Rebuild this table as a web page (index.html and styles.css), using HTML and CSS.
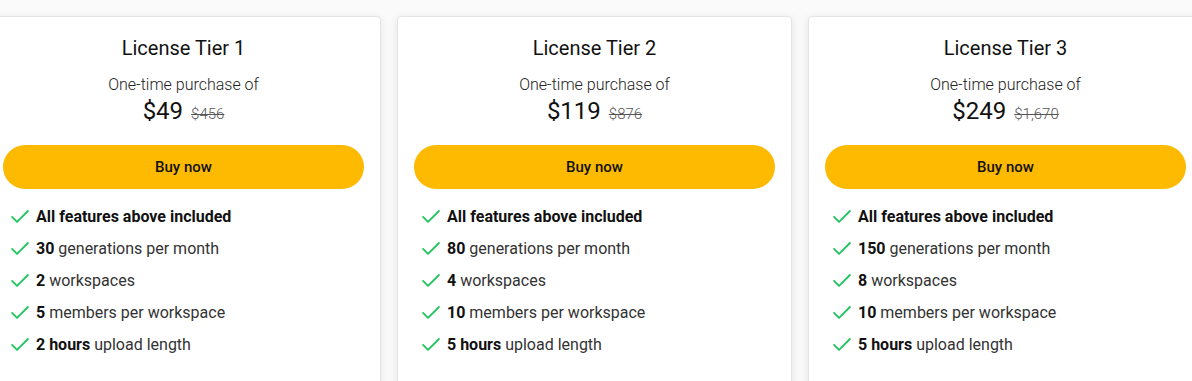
FILE: index.html
```html
<!DOCTYPE html>
<html lang="en">
<head>
    <meta charset="UTF-8">
    <meta name="viewport" content="width=device-width, initial-scale=1.0">
    <title>Pricing - License Tiers</title>
    <link rel="stylesheet" href="styles.css">
</head>
<body>
    <div class="tiers">
        <div class="tier-card">
            <h2>License Tier 1</h2>
            <p class="price-label">One-time purchase of</p>
            <div class="price">
                <span class="price-now">$49</span>
                <span class="price-old">$456</span>
            </div>
            <button class="buy-button">Buy now</button>
            <ul class="features">
                <li><svg class="check" viewBox="0 0 24 24"><path d="M2.5 13l6 6L21.5 6"/></svg><span><b>All features above included</b></span></li>
                <li><svg class="check" viewBox="0 0 24 24"><path d="M2.5 13l6 6L21.5 6"/></svg><span><b>30</b> generations per month</span></li>
                <li><svg class="check" viewBox="0 0 24 24"><path d="M2.5 13l6 6L21.5 6"/></svg><span><b>2</b> workspaces</span></li>
                <li><svg class="check" viewBox="0 0 24 24"><path d="M2.5 13l6 6L21.5 6"/></svg><span><b>5</b> members per workspace</span></li>
                <li><svg class="check" viewBox="0 0 24 24"><path d="M2.5 13l6 6L21.5 6"/></svg><span><b>2 hours</b> upload length</span></li>
            </ul>
        </div>

        <div class="tier-card">
            <h2>License Tier 2</h2>
            <p class="price-label">One-time purchase of</p>
            <div class="price">
                <span class="price-now">$119</span>
                <span class="price-old">$876</span>
            </div>
            <button class="buy-button">Buy now</button>
            <ul class="features">
                <li><svg class="check" viewBox="0 0 24 24"><path d="M2.5 13l6 6L21.5 6"/></svg><span><b>All features above included</b></span></li>
                <li><svg class="check" viewBox="0 0 24 24"><path d="M2.5 13l6 6L21.5 6"/></svg><span><b>80</b> generations per month</span></li>
                <li><svg class="check" viewBox="0 0 24 24"><path d="M2.5 13l6 6L21.5 6"/></svg><span><b>4</b> workspaces</span></li>
                <li><svg class="check" viewBox="0 0 24 24"><path d="M2.5 13l6 6L21.5 6"/></svg><span><b>10</b> members per workspace</span></li>
                <li><svg class="check" viewBox="0 0 24 24"><path d="M2.5 13l6 6L21.5 6"/></svg><span><b>5 hours</b> upload length</span></li>
            </ul>
        </div>

        <div class="tier-card">
            <h2>License Tier 3</h2>
            <p class="price-label">One-time purchase of</p>
            <div class="price">
                <span class="price-now">$249</span>
                <span class="price-old">$1,670</span>
            </div>
            <button class="buy-button">Buy now</button>
            <ul class="features">
                <li><svg class="check" viewBox="0 0 24 24"><path d="M2.5 13l6 6L21.5 6"/></svg><span><b>All features above included</b></span></li>
                <li><svg class="check" viewBox="0 0 24 24"><path d="M2.5 13l6 6L21.5 6"/></svg><span><b>150</b> generations per month</span></li>
                <li><svg class="check" viewBox="0 0 24 24"><path d="M2.5 13l6 6L21.5 6"/></svg><span><b>8</b> workspaces</span></li>
                <li><svg class="check" viewBox="0 0 24 24"><path d="M2.5 13l6 6L21.5 6"/></svg><span><b>10</b> members per workspace</span></li>
                <li><svg class="check" viewBox="0 0 24 24"><path d="M2.5 13l6 6L21.5 6"/></svg><span><b>5 hours</b> upload length</span></li>
            </ul>
        </div>
    </div>
</body>
</html>
```

FILE: styles.css
```css
* {
    margin: 0;
    padding: 0;
    box-sizing: border-box;
}

body {
    font-family: Roboto, 'Liberation Sans', Arial, sans-serif;
    background: #fafafb;
    color: #111;
    overflow: hidden;
}

.tiers {
    display: flex;
    gap: 16px;
    padding-top: 16px;
    margin-left: -14px;
}

.tier-card {
    flex: 0 0 395px;
    height: 400px;
    background: white;
    border: 1px solid #e3e4e8;
    border-radius: 4px;
    box-shadow: 0 2px 10px rgba(0, 0, 0, 0.09);
    padding: 17px 16px;
    text-align: center;
}

.tier-card h2 {
    font-size: 20px;
    font-weight: 400;
    line-height: 28px;
    color: #111;
}

.price-label {
    margin-top: 11px;
    font-size: 16px;
    font-weight: 300;
    line-height: 24px;
    color: #222;
}

.price {
    display: flex;
    justify-content: center;
    align-items: baseline;
    gap: 8px;
    line-height: 28px;
}

.price-now {
    font-size: 24px;
    font-weight: 400;
    color: #111;
}

.price-old {
    font-size: 15px;
    font-weight: 300;
    color: #555;
    text-decoration: line-through;
}

.buy-button {
    display: block;
    width: 100%;
    height: 44px;
    margin-top: 17px;
    border: none;
    border-radius: 22px;
    background: #fdba00;
    color: #111;
    font-family: inherit;
    font-size: 15px;
    font-weight: 500;
    cursor: pointer;
}

.features {
    list-style: none;
    margin-top: 11px;
    padding-left: 7px;
    text-align: left;
}

.features li {
    display: flex;
    align-items: center;
    gap: 6px;
    height: 32px;
    font-size: 16px;
    color: #333;
}

.features b {
    font-weight: 700;
    color: #111;
}

.check {
    width: 20px;
    height: 20px;
    flex-shrink: 0;
    fill: none;
    stroke: #22c55e;
    stroke-width: 2.2;
    stroke-linecap: round;
    stroke-linejoin: round;
}
```
